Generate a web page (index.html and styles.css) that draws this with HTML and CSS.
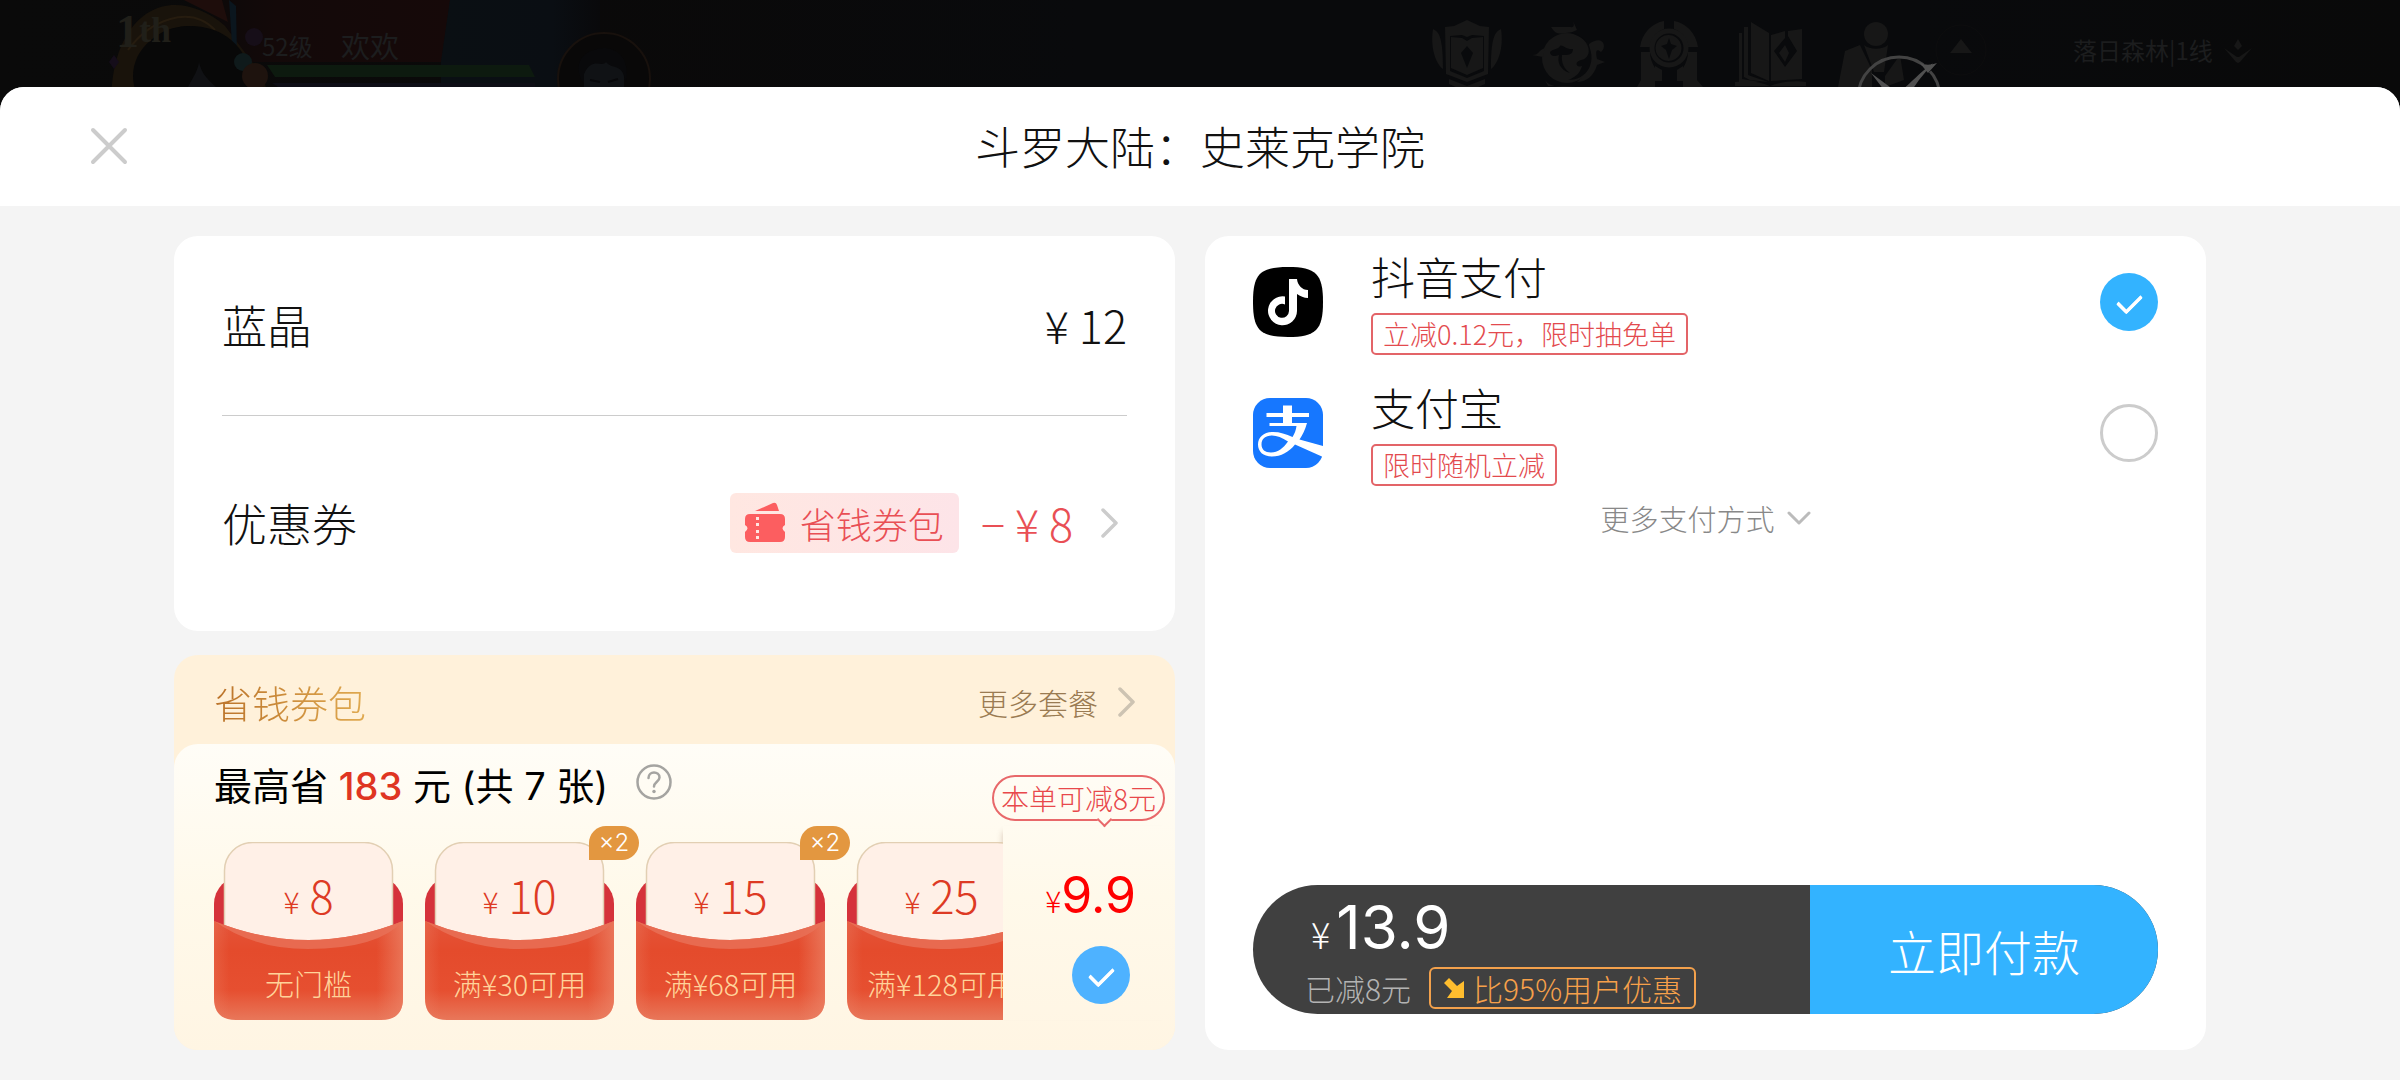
FILE: index.html
```
<!DOCTYPE html>
<html lang="zh-CN">
<head>
  <meta charset="UTF-8">
  <title>斗罗大陆：史莱克学院</title>
  <meta name="viewport" content="width=device-width, initial-scale=1.0">
  <link rel="stylesheet" href="styles.css">
</head>
<body>

  <!-- Shared shapes -->
  <svg class="defs" width="0" height="0" aria-hidden="true">
    <defs>
      <linearGradient id="front" x1="0" y1="0" x2="0" y2="1">
        <stop offset="0" stop-color="#e4543a"/>
        <stop offset="0.3" stop-color="#e44b2c"/>
        <stop offset="0.7" stop-color="#e64f30"/>
        <stop offset="1" stop-color="#e8775a"/>
      </linearGradient>
      <linearGradient id="frontEdge" x1="0" y1="0" x2="1" y2="0">
        <stop offset="0" stop-color="#ec8468" stop-opacity="0.3"/>
        <stop offset="0.08" stop-color="#ec8468" stop-opacity="0"/>
        <stop offset="0.86" stop-color="#ec8468" stop-opacity="0"/>
        <stop offset="1" stop-color="#ec8468" stop-opacity="0.7"/>
      </linearGradient>
      <symbol id="envelope" viewBox="0 0 189 178">
        <rect x="0" y="34" width="189" height="120" rx="28" fill="#d5323b"/>
        <rect x="10.500" y="0.500" width="168" height="120" rx="28" fill="#fff0e7" stroke="#e2cfb3" stroke-width="1.500"/>
        <path d="M0 79Q94 117 189 79V156Q189 178 167 178H22Q0 178 0 156Z" fill="url(#front)"/>
        <path d="M0 79Q94 117 189 79V156Q189 178 167 178H22Q0 178 0 156Z" fill="url(#frontEdge)"/>
        <path d="M0 79Q94 117 189 79Q164 107 94 107Q40 107 0 79Z" fill="#e97259" opacity="0.800"/>
      </symbol>
      <symbol id="chevron" viewBox="0 0 18 30">
        <path d="M2 2L15 15L2 28" fill="none" stroke="currentColor" stroke-width="3.500" stroke-linecap="round" stroke-linejoin="round"/>
      </symbol>
    </defs>
  </svg>

  <!-- Dimmed game scene -->
  <div class="scene">
    <svg width="700" height="110" viewBox="0 0 700 110">
      <defs>
        <linearGradient id="red" x1="0" y1="0" x2="1" y2="0">
          <stop offset="0" stop-color="#0b0909"/>
          <stop offset="0.3" stop-color="#130909"/>
          <stop offset="1" stop-color="#160909"/>
        </linearGradient>
        <linearGradient id="blue" x1="0" y1="0" x2="1" y2="0">
          <stop offset="0" stop-color="#0a0f13"/>
          <stop offset="0.7" stop-color="#0a0e13"/>
          <stop offset="1" stop-color="#09090b"/>
        </linearGradient>
      </defs>
      <path d="M200 0H450L441 62H250Z" fill="url(#red)"/>
      <path d="M450 0H600V87H441V62Z" fill="url(#blue)"/>
      <path d="M112 110C108 50 135 5 175 5C190 5 210 12 225 26L264 78L270 110H250C240 50 215 25 185 26C145 30 132 60 136 110Z" fill="#19130b"/>
      <path d="M128 50C150 20 190 4 215 30" fill="none" stroke="#261c0f" stroke-width="2"/>
      <path d="M184 0H222L228 22Z" fill="#1e0d0b"/>
      <path d="M229 0L236 6L237 56L232 44Z" fill="#0b161e"/>
      <ellipse cx="191" cy="76" rx="58" ry="50" fill="#080808"/>
      <path d="M188 87C194 76 198 70 199 62C201 72 206 78 216 87Z" fill="#101114"/>
      <circle cx="254" cy="37" r="9" fill="#160e18"/>
      <circle cx="243" cy="62" r="9" fill="#0f1a1b"/>
      <circle cx="255" cy="76" r="13" fill="#1e130e"/>
      <path d="M114 55L119 62L114 69L109 62Z" fill="#150d1a"/>
      <text x="116" y="47" class="rank" font-size="46">1<tspan font-size="36" dy="-5">th</tspan></text>
      <text x="262" y="56" class="level" font-size="24">52级</text>
      <text x="341" y="58" class="level" font-size="29">欢欢</text>
      <path d="M267 65H529L535 77H275Z" fill="#0d1a0f"/>
      <path d="M272 83H535V87H278Z" fill="#0e0e16"/>
      <ellipse cx="604" cy="79" rx="46" ry="46" fill="#090808" stroke="#18110d" stroke-width="2"/>
      <path d="M584 110V74C586 62 596 60 606 60C616 60 626 66 624 84V110Z" fill="#101215"/>
      <path d="M584 74C592 56 602 68 606 62C612 70 622 62 626 82C632 50 606 44 594 50C578 54 574 70 584 84Z" fill="#09090b"/>
      <path d="M590 80L600 82M608 82L618 79" stroke="#08080a" stroke-width="2"/>
    </svg>
    <svg width="980" height="110" viewBox="1420 0 980 110" fill="#171717">
      <!-- shield -->
      <path d="M1467 20L1480 26L1489 27L1488 74L1467 82L1446 74L1445 27L1454 26ZM1450 36V71L1467 78L1484 71V36L1472 35L1467 37L1462 35Z" fill-rule="evenodd"/>
      <path d="M1451 37L1462 38L1467 41L1472 38L1483 37V68L1467 75L1451 68ZM1467 46L1461 53L1467 68L1473 53Z" fill-rule="evenodd"/>
      <path d="M1433 29C1440 32 1443 40 1443 69C1436 64 1430 48 1433 29ZM1501 29C1494 32 1491 40 1491 69C1498 64 1504 48 1501 29ZM1449 79L1467 86L1485 79V84L1467 92L1449 84Z"/>
      <!-- serpent ball -->
      <path d="M1551 27H1570C1575 28 1574 24 1573 21L1577 30L1570 33C1556 34 1556 34 1551 27Z"/>
      <circle cx="1567" cy="58" r="25"/>
      <path d="M1532 55C1540 55 1538 50 1545 48L1543 57ZM1589 44C1602 34 1608 46 1601 52C1595 47 1596 54 1597 59L1605 62L1597 65C1594 76 1586 82 1577 82C1592 70 1590 56 1589 44ZM1545 80C1550 88 1562 87 1576 86H1548Z"/>
      <path d="M1550 52C1554 48 1558 50 1560 46C1562 44 1566 50 1573 49C1573 56 1566 55 1562 55C1561 62 1564 69 1570 73C1560 70 1557 62 1559 55C1554 57 1550 56 1550 52ZM1566 32C1592 36 1594 58 1581 60C1574 62 1576 68 1582 66C1580 74 1574 78 1568 80C1588 80 1596 62 1589 46C1584 36 1575 32 1566 32Z" fill="#090a0c"/>
      <!-- gate -->
      <path d="M1640 47C1642 33 1652 23 1664 21V29C1656 32 1652 38 1651 47ZM1698 47C1696 33 1686 23 1674 21V29C1682 32 1686 38 1687 47ZM1641 52H1650C1650 58 1652 63 1655 68V87H1637L1641 80ZM1697 52H1688C1688 58 1686 63 1683 68V87H1703L1697 80ZM1655 66L1662 70V81H1655ZM1683 66L1677 70V81H1683Z"/>
      <circle cx="1669" cy="48" r="17" fill="none" stroke="#171717" stroke-width="5"/>
      <path d="M1669 35A13 13 0 1 1 1668 35ZM1669 38L1667 44L1661 46L1666 50L1669 59L1672 50L1677 46L1671 44Z" fill-rule="evenodd"/>
      <!-- book -->
      <path d="M1751 22L1769 33V81L1751 73ZM1744 27H1748V75L1768 82L1750 80L1744 77ZM1739 33H1742V79L1760 82H1739ZM1771 35L1785 31V38L1774 51L1785 67L1797 51L1788 36V31L1802 29V79L1771 81ZM1735 82C1750 80 1760 82 1770 86C1780 82 1795 80 1806 82V86H1735ZM1785 45L1789 53L1785 62L1779 53Z"/>
      <!-- person -->
      <circle cx="1876" cy="34" r="12"/>
      <path d="M1864 45C1870 50 1882 50 1888 45L1884 72H1874ZM1860 45L1845 51L1838 87H1872V70ZM1900 55L1885 76V87L1904 80Z"/>
      <circle cx="1961" cy="50" r="25" fill="none" stroke="#0d0d0e"/>
      <path d="M1961 39L1972 53H1950Z"/>
      <!-- compass -->
      <circle cx="1899" cy="98" r="41" fill="none" stroke="#434343" stroke-width="3"/>
      <path d="M1932 63L1922 73" stroke="#090a0c" stroke-width="9"/>
      <path d="M1871 73L1894 90H1884ZM1933 63L1919 80L1912 90H1902C1912 82 1918 74 1933 63ZM1919 62C1926 66 1930 65 1937 63L1928 73Z" fill="#505050"/>
      <text class="level" x="2073" y="60" font-size="24">落日森林|1线</text>
      <path d="M2238 39L2242 46L2238 50L2234 46ZM2224 48L2237 57H2239L2252 48L2240 62L2238 63L2236 62Z"/>
    </svg>
  </div>

  <main class="sheet">
    <header class="sheet-header">
      <button class="close" type="button" aria-label="关闭">
        <svg width="38" height="38" viewBox="0 0 38 38"><path d="M3 3L35 35M35 3L3 35" stroke="#ccc" stroke-width="4" stroke-linecap="round"/></svg>
      </button>
      <h1>斗罗大陆：史莱克学院</h1>
    </header>

    <form class="content">
      <div class="column">
        <!-- Order -->
        <section class="card order">
          <div class="order-row">
            <span>蓝晶</span>
            <span>¥ 12</span>
          </div>
          <div class="order-row">
            <span>优惠券</span>
            <button class="voucher" type="button">
              <span class="voucher-tag">
                <svg width="42" height="42" viewBox="0 0 42 42" fill="#fc5e60">
                  <path d="M11 9L29 1Q32 0 33 3L35 9Z"/>
                  <path fill-rule="evenodd" d="M6 12H36Q41 12 41 17V23Q36 26 41 30V35Q41 40 36 40H6Q1 40 1 35V30Q6 26 1 23V17Q1 12 6 12ZM12 15V18H15V15ZM12 21V24H15V21ZM12 28V31H15V28ZM12 34V37H15V34Z"/>
                </svg>
                省钱券包
              </span>
              <span class="voucher-amount">− ¥ 8</span>
              <svg class="chevron" width="18" height="30"><use href="#chevron"/></svg>
            </button>
          </div>
        </section>

        <!-- Coupon package -->
        <section class="package">
          <div class="package-header">
            <h2>省钱券包</h2>
            <button class="package-more" type="button">
              更多套餐
              <svg width="18" height="30"><use href="#chevron"/></svg>
            </button>
          </div>
          <div class="package-body">
            <div class="package-title">
              <h3>最高省 <em>183</em> 元 (共 7 张)</h3>
              <button class="help" type="button" aria-label="说明">
                <svg width="36" height="36" viewBox="0 0 36 36" fill="none" stroke="#a5a4a1" stroke-width="2.500" stroke-linecap="round">
                  <circle cx="18" cy="18" r="16.500"/>
                  <path d="M12.500 14C12.500 6.500 23.500 7 23.500 13.500C23.500 17.500 18 18 18 22.500"/>
                  <path d="M18 27.500V27.600" stroke-width="3.500"/>
                </svg>
              </button>
              <span class="bubble">本单可减8元</span>
            </div>
            <div class="package-offer">
              <ul class="coupons">
                <li class="coupon">
                  <svg class="coupon-art"><use href="#envelope"/></svg>
                  <p class="coupon-price"><small>¥</small> 8</p>
                  <p class="coupon-rule">无门槛</p>
                </li>
                <li class="coupon">
                  <svg class="coupon-art"><use href="#envelope"/></svg>
                  <span class="badge">×2</span>
                  <p class="coupon-price"><small>¥</small> 10</p>
                  <p class="coupon-rule">满¥30可用</p>
                </li>
                <li class="coupon">
                  <svg class="coupon-art"><use href="#envelope"/></svg>
                  <span class="badge">×2</span>
                  <p class="coupon-price"><small>¥</small> 15</p>
                  <p class="coupon-rule">满¥68可用</p>
                </li>
                <li class="coupon">
                  <svg class="coupon-art"><use href="#envelope"/></svg>
                  <p class="coupon-price"><small>¥</small> 25</p>
                  <p class="coupon-rule">满¥128可用</p>
                </li>
              </ul>
              <label class="package-buy">
                <span class="package-price"><small>¥</small>9.9</span>
                <input class="check check-soft" type="checkbox" name="package" checked>
              </label>
            </div>
          </div>
        </section>
      </div>

      <!-- Payment -->
      <section class="card payment">
        <label class="method">
          <svg width="70" height="70" viewBox="0 0 70 70">
            <path d="M0 35C0 7 7 0 35 0S70 7 70 35S63 70 35 70S0 63 0 35Z"/>
            <path fill="#fff" d="M36 12H44C44.500 18 49 23 55 23V31C51 31 47 29 44 27V44A14.500 14.500 0 1 1 32 29.500V37.500A7 7 0 1 0 36 44Z"/>
          </svg>
          <span class="method-info">
            <span class="method-name">抖音支付</span>
            <span class="method-tag">立减0.12元，限时抽免单</span>
          </span>
          <input class="check" type="radio" name="method" checked>
        </label>
        <label class="method">
          <svg width="70" height="70" viewBox="0 0 70 70">
            <rect width="70" height="70" rx="17" fill="#1677ff"/>
            <path fill="#fff" d="M30 7.500H39V15H56V19H39V26H30V19H13.500V15H30Z"/>
            <path fill="#fff" fill-rule="evenodd" d="M16.500 25H54C52 32 49.500 37 46.500 41.500L70 48V59L42 46.500C36 54 28 58.500 19 58.500C10 58.500 5 53.500 5 46.500C5 39 11 34 20 34C27 34 33 36 39.500 39C41.500 36 43 32 43.500 28H16.500ZM35 43.500C29 39.500 24 37.500 19 37.500C12 37.500 8.500 41 8.500 46.500C8.500 51.500 12 54.500 18 54.500C25 54.500 30.500 50 35 43.500Z"/>
          </svg>
          <span class="method-info">
            <span class="method-name">支付宝</span>
            <span class="method-tag">限时随机立减</span>
          </span>
          <input class="check" type="radio" name="method">
        </label>
        <button class="method-more" type="button">
          更多支付方式
          <svg width="24" height="16" viewBox="0 0 24 16"><path d="M2 3L12 13L22 3" fill="none" stroke="#bbb" stroke-width="3" stroke-linecap="round" stroke-linejoin="round"/></svg>
        </button>

        <div class="pay-bar">
          <div class="pay-total">
            <p class="pay-price"><small>¥</small>13.9</p>
            <p class="pay-saved">
              已减8元
              <span class="pay-tag">
                <svg width="22" height="22" viewBox="0 0 22 22"><path d="M1 6L6 1L14 9L21 4V21H4L9 14Z" fill="#ffbd2e"/></svg>
                比95%用户优惠
              </span>
            </p>
          </div>
          <button class="pay-button" type="submit">立即付款</button>
        </div>
      </section>
    </form>
  </main>

</body>
</html>
```
FILE: styles.css
```
* {
  box-sizing: border-box;
}
body {
  margin: 0;
  min-height: 100vh;
  display: flex;
  flex-direction: column;
  background-color: #090909;
  color: #111;
  font-family: "Noto Sans CJK SC", sans-serif;
  font-weight: 300;
}
h1, h2, h3, p, ul {
  margin: 0;
  padding: 0;
  font-weight: 300;
}
button {
  padding: 0;
  border: none;
  background: none;
  color: inherit;
  font: inherit;
  cursor: pointer;
}
svg {
  display: block;
  flex: none;
}
.defs {
  position: absolute;
}

/* Game scene behind the sheet */
.scene {
  display: flex;
  justify-content: space-between;
  height: 87px;
  margin-bottom: -24px;
  padding-bottom: 24px;
  box-sizing: content-box;
  overflow: hidden;
  background: linear-gradient(90deg, #0a0a0a, #0a0909 24%, #090a0c 45%, #090a0c 80%, #090909);
}
.rank {
  font-family: "Liberation Serif", serif;
  font-weight: bold;
  fill: #201f19;
}
.level {
  font-weight: 400;
  fill: #1c1d1e;
}

/* Sheet */
.sheet {
  flex: 1;
  display: flex;
  flex-direction: column;
  position: relative;
  border-radius: 24px 24px 0 0;
  background-color: #f4f4f4;
  overflow: hidden;
}
.sheet-header {
  display: grid;
  grid-template-columns: 1fr auto 1fr;
  align-items: center;
  padding: 29px 90px 30px;
  background-color: white;
}
.close {
  justify-self: start;
}
h1 {
  font-size: 45px;
  line-height: 60px;
}
.content {
  flex: 1;
  display: grid;
  grid-template-columns: minmax(0, 1fr) minmax(0, 1fr);
  gap: 30px;
  padding: 30px 194px 30px 174px;
}
.card {
  border-radius: 24px;
  background-color: white;
}
.column {
  display: flex;
  flex-direction: column;
  gap: 24px;
}

/* Order */
.order {
  flex: 1;
  padding: 0 48px;
}
.order-row {
  display: flex;
  justify-content: space-between;
  align-items: center;
  padding: 59px 0 60px;
  font-size: 45px;
  line-height: 60px;
}
.order-row + .order-row {
  padding: 77px 0;
  border-top: 1px solid #ccc;
}
.voucher {
  display: flex;
  align-items: center;
  padding-right: 8px;
  color: #e94f55;
}
.voucher-tag {
  display: flex;
  align-items: center;
  gap: 14px;
  height: 60px;
  padding: 0 15px 0 14px;
  border-radius: 6px;
  background: linear-gradient(90deg, #ffe7e1, #fde4e8);
  font-size: 36px;
}
.voucher-amount {
  margin: 0 28px 0 22px;
}
.chevron {
  color: #ccc;
}

/* Coupon package */
.package {
  border-radius: 24px;
  background-color: #fff1da;
  overflow: hidden;
}
.package-header {
  display: flex;
  justify-content: space-between;
  align-items: center;
  padding: 17px 39px 12px 40px;
  line-height: 60px;
}
h2 {
  background: linear-gradient(90deg, #bb732a, #e0aa50);
  background-clip: text;
  color: transparent;
  font-size: 38px;
}
.package-more {
  display: flex;
  align-items: center;
  gap: 20px;
  color: #9a7b52;
  font-size: 30px;
}
.package-more svg {
  color: #cdc3b2;
}
.package-body {
  padding-bottom: 30px;
  border-radius: 24px 24px 0 0;
  background: linear-gradient(#fffdf7, #fff9ea 50%, #fff5e3);
}
.package-title {
  display: flex;
  height: 82px;
  padding: 0 10px 0 40px;
}
h3 {
  margin-top: 12px;
  color: black;
  font-family: Inter, "Noto Sans CJK SC", sans-serif;
  font-size: 38px;
  font-weight: 400;
  line-height: 60px;
}
em {
  color: #df3522;
  font-style: normal;
  font-weight: 500;
}
.help {
  align-self: flex-start;
  margin: 20px auto 0 28px;
}
.bubble {
  position: relative;
  height: 46px;
  margin-top: 31px;
  padding: 0 7px;
  border: 2px solid #e8686a;
  border-radius: 23px;
  color: #e8484b;
  font-size: 28px;
  line-height: 42px;
}
.bubble::after {
  content: "";
  position: absolute;
  right: 53px;
  bottom: -6px;
  width: 9px;
  height: 9px;
  border: solid #e8686a;
  border-width: 0 2px 2px 0;
  background-color: #fffbf1;
  transform: rotate(45deg);
}
.package-offer {
  display: flex;
  margin-top: -16px;
}
.coupons {
  flex: 1;
  display: flex;
  gap: 22px;
  min-width: 0;
  padding-top: 32px;
  margin-left: 40px;
  overflow: hidden;
  list-style: none;
}
.coupon {
  flex: none;
  position: relative;
  width: 189px;
  height: 178px;
  padding-top: 28px;
  text-align: center;
  white-space: nowrap;
}
.coupon-art {
  position: absolute;
  top: 0;
  left: 0;
  width: 189px;
  height: 178px;
}
.coupon-price {
  position: relative;
  color: #dd3a24;
  font-size: 45px;
  line-height: 50px;
}
small {
  font-size: 30px;
  line-height: 1;
}
.coupon-rule {
  position: relative;
  margin-top: 40px;
  color: #ffd39a;
  font-size: 29px;
  line-height: 46px;
}
.badge {
  position: absolute;
  top: -16px;
  right: -25px;
  z-index: 1;
  width: 50px;
  height: 34px;
  border-radius: 17px 17px 17px 0;
  background-color: #e39740;
  color: white;
  font-family: Inter, sans-serif;
  font-size: 24px;
  line-height: 34px;
}
.package-buy {
  display: flex;
  flex-direction: column;
  align-items: flex-end;
  gap: 21px;
  width: 172px;
  margin-top: 16px;
  padding: 39px 39px 0 0;
  box-shadow: -6px 0 6px -6px rgba(120, 70, 40, 0.3);
}
.package-buy .check {
  margin-right: 6px;
}
.package-price {
  color: #f00;
  font-family: Inter, "Noto Sans CJK SC", sans-serif;
  font-size: 50px;
  font-weight: 400;
  line-height: 60px;
}
.package-price small, .pay-price small {
  font-family: "Noto Sans CJK SC", sans-serif;
  font-weight: 300;
}

/* Round tick boxes */
.check {
  appearance: none;
  flex: none;
  display: flex;
  justify-content: center;
  width: 58px;
  height: 58px;
  margin: 0;
  border: 3px solid #ccc;
  border-radius: 50%;
}
.check:checked {
  border: none;
  background-color: #33b3ff;
}
.check-soft:checked {
  background-color: #4eb2ff;
}
.check:checked::after {
  content: "";
  width: 11px;
  height: 20px;
  margin-top: 16px;
  border: solid white;
  border-width: 0 4px 4px 0;
  border-radius: 2px;
  transform: rotate(45deg);
}

/* Payment */
.payment {
  display: flex;
  flex-direction: column;
  padding: 0 48px 36px;
}
.method {
  display: flex;
  align-items: center;
  gap: 48px;
  height: 131px;
}
.method-info {
  flex: 1;
  display: flex;
  flex-direction: column;
  align-items: flex-start;
  gap: 9px;
}
.method-name {
  font-size: 44px;
  line-height: 56px;
}
.method-tag {
  padding: 0 10px;
  border: 2px solid #e36468;
  border-radius: 5px;
  color: #e34a4e;
  font-size: 27px;
  line-height: 38px;
}
.method-more {
  align-self: center;
  display: flex;
  align-items: center;
  gap: 12px;
  color: #888;
  font-size: 29px;
  line-height: 40px;
}
.pay-bar {
  display: flex;
  height: 129px;
  margin-top: auto;
  border-radius: 65px;
  background-color: #404040;
  overflow: hidden;
}
.pay-total {
  flex: 1;
  padding: 10px 0 0 52px;
  color: white;
}
.pay-price {
  padding-left: 6px;
  font-family: Inter, "Noto Sans CJK SC", sans-serif;
  font-size: 60px;
  font-weight: 400;
  line-height: 64px;
}
.pay-price small {
  margin-right: 6px;
  font-size: 36px;
}
.pay-saved {
  display: flex;
  align-items: center;
  gap: 18px;
  margin-top: 8px;
  color: #b3b3b3;
  font-size: 30px;
  line-height: 38px;
}
.pay-tag {
  display: flex;
  align-items: center;
  gap: 8px;
  padding: 0 12px;
  border: 2px solid #f3a14c;
  border-radius: 6px;
  color: #f7a04a;
}
.pay-button {
  width: 348px;
  background-color: #33b3ff;
  color: white;
  font-size: 48px;
}
```
